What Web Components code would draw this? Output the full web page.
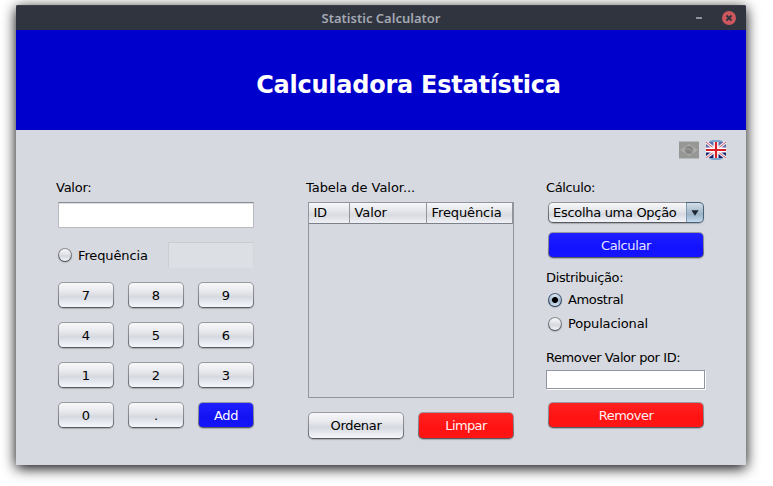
<!DOCTYPE html>
<html lang="pt">
<head>
<meta charset="utf-8">
<title>Statistic Calculator</title>
<style>
html,body{margin:0;height:100%;background:#fff;overflow:hidden}
body{font:13px/15px "DejaVu Sans",sans-serif;color:#000;box-sizing:border-box;padding:5px 0 0 16px}
</style>
</head>
<body>
<calc-app></calc-app>
<script>
const define = (name, html) => customElements.define(name, class extends HTMLElement {
  constructor() {
    super();
    const t = document.createElement('template');
    t.innerHTML = html;
    this.attachShadow({ mode: 'open' }).append(t.content.cloneNode(true));
  }
});

define('window-frame', `
<style>
:host{display:flex;flex-direction:column;width:730px;height:460px;background:#d6d9df;border-radius:2px 2px 0 0;box-shadow:0 3px 14px #000}
header{height:25px;background:#2f343f;border-radius:2px 2px 0 0;display:grid;grid-template-columns:80px 1fr 80px;align-items:center;box-shadow:inset 0 1px #3b404a}
h1{grid-column:2;margin:0;position:relative;text-align:center;font:600 13px/18px "Noto Sans",sans-serif;color:#a4a9b3;letter-spacing:0}
.ctl{display:flex;align-items:center;justify-content:flex-end;gap:20px;padding-right:10px}
.min{width:6px;height:2px;background:#90939b}
svg{display:block}
</style>
<header><h1><slot name="title"></slot></h1><div class="ctl"><span class="min"></span>
<svg width="14" height="14" viewBox="0 0 14 14"><circle cx="7" cy="7" r="7" fill="#cc575d"/><path d="M4.5 4.5l5 5M9.5 4.5l-5 5" stroke="#2f343f" stroke-width="2"/></svg></div></header>
<slot></slot>`);

define('app-banner', `
<style>
:host{display:flex;align-items:center;justify-content:center;height:100px;background:#0000cc;color:#fff;box-sizing:border-box;padding:10px 0 0 55px}
h2{margin:0;font:bold 24px/28px "DejaVu Sans",sans-serif;white-space:nowrap;letter-spacing:-.25px}
</style><h2><slot></slot></h2>`);

define('text-label', `
<style>:host{display:block;height:15px;line-height:15px;white-space:nowrap}</style><slot></slot>`);

define('text-box', `
<style>
:host{display:block;box-sizing:border-box;height:26px;background:#fff;border:1px solid #b8babf;border-top-color:#8c8d92;box-shadow:inset 0 1px #dcdde0}
:host([disabled]){background:#dcdfe3;border-color:#c9ccd1 #d3d6db #dbdee3 #cbced4;box-shadow:none}
:host([plain]){height:19px;border-color:#92959d;box-shadow:1px 1px #fff}
</style>`);

define('push-button', `
<style>
:host{display:block;height:26px;box-sizing:border-box;border-radius:5px;padding:1px;
 background:linear-gradient(#9a9ca1,#85878c 60%,#55575c);box-shadow:0 1px 1px #a9acb2}
div{height:100%;box-sizing:border-box;border-radius:4px;display:flex;align-items:center;justify-content:center;padding-top:var(--nudge,1px);white-space:nowrap;
 background:linear-gradient(#f8f8fa 0,#e8e9ed 35%,#d6d9df 57%,#dfe2e9 70%,#f5f7fc 100%)}
:host([tone=blue]) div{background:linear-gradient(#2020ff,#1212f2 60%,#1515ff);color:#fff}
:host([tone=bright]) div{background:linear-gradient(#2020ff,#1212ff 60%,#1515ff);color:#e4e6ff}
:host([tone=red]) div{background:linear-gradient(#ff2222,#ff1212 60%,#ff1616);color:#fff0f0}
</style><div><slot></slot></div>`);

define('radio-option', `
<style>
:host{display:flex;align-items:center;gap:6px;height:15px;white-space:nowrap}
i{width:14px;height:14px;box-sizing:border-box;border-radius:50%;padding:1px;background:linear-gradient(#909298,#505258);box-shadow:0 1px 1px #b5b8be;display:flex}
b{flex:1;border-radius:50%;background:linear-gradient(#fafafc,#dfe1e6 45%,#d3d6dc 58%,#f5f6fa)}
:host([checked]) i{background:linear-gradient(#53677e,#22364c)}
:host([checked]) b{background:radial-gradient(circle,#000 2.6px,transparent 3.4px),linear-gradient(#e3edf5,#9db5c9 55%,#d6e8f8)}
</style><i><b></b></i><span><slot></slot></span>`);

define('select-box', `
<style>
:host{display:flex;height:21px;box-sizing:border-box;border-radius:5px;padding:1px;background:linear-gradient(90deg,transparent 138px,#4b6176 138px),linear-gradient(#94969b,#55575c);box-shadow:0 1px 1px #a9acb2}
span{flex:1;padding-left:4px;line-height:19px;white-space:nowrap;border-radius:4px 0 0 4px;background:linear-gradient(#f8f8fa,#e4e6ea 40%,#d6d9df 60%,#f3f5fa)}
div{width:16px;border-left:1px solid #7f98ae;border-radius:0 4px 4px 0;background:linear-gradient(#d3dfe9,#a4bacc 50%,#9cb3c6 60%,#c4dbf0);display:flex;align-items:center;justify-content:center}
svg{display:block}
</style><span><slot></slot></span><div><svg width="8" height="6"><path d="M.4.3h7.2L4 5.8z" fill="#1c2731"/></svg></div>`);

define('value-table', `
<style>
:host{display:block;height:196px;box-sizing:border-box;border:1px solid #92959d}
table{width:100%;border-collapse:separate;border-spacing:0;table-layout:fixed}
th{height:21px;box-sizing:border-box;padding:0 0 1px 4.5px;text-align:left;font-weight:normal;line-height:18px;white-space:nowrap;
 border-right:1px solid #92959d;border-bottom:1px solid #7c8088;background:linear-gradient(#f7f7f9,#e4e6ea 40%,#d9dbe1 60%,#eff1f6)}
</style>
<table><colgroup><col style="width:41px"><col style="width:77px"><col></colgroup><thead><tr>
<th style="letter-spacing:-.4px">ID</th><th style="letter-spacing:-.1px">Valor</th><th style="letter-spacing:-.1px">Frequência</th></tr></thead></table>`);

define('flag-switch', `
<style>:host{display:flex;justify-content:flex-end;gap:7px;height:20px}svg{display:block}</style>
<svg width="20" height="20" viewBox="0 0 20 20"><path fill="#b8bbbd" d="M0 1h20v18H0z"/><path fill="#979896" d="M0 2h20v16H0z"/><path fill="#aaaba8" d="M1 10l9-6 9 6-9 6z"/><circle cx="10" cy="10" r="4" fill="#858684"/><path d="M6.5 8.8q4-.5 7 2.6" fill="none" stroke="#a5a6a4"/></svg>
<svg width="20" height="20" viewBox="0 0 20 20"><rect x="2" width="16" height="20" rx="5" fill="#7aa5cf"/><path fill="#17206f" d="M0 2h20v16H0z"/><path fill="#6069a8" d="M0 2h20v7H0z"/><path stroke="#eceaf2" stroke-width="3" d="M0 2l20 16M20 2L0 18"/><path stroke="#d9606a" stroke-width="1" d="M0 2l20 16M20 2L0 18"/><path stroke="#fff" stroke-width="5" d="M10 2v16M0 10h20"/><path stroke="#d81f2a" stroke-width="2.2" d="M10 2v16M0 10h20"/></svg>`);

define('key-pad', `
<style>:host{display:grid;grid-template-columns:repeat(3,56px);gap:14px}</style>
<push-button>7</push-button><push-button>8</push-button><push-button>9</push-button>
<push-button>4</push-button><push-button>5</push-button><push-button>6</push-button>
<push-button>1</push-button><push-button>2</push-button><push-button>3</push-button>
<push-button>0</push-button><push-button>.</push-button><push-button tone="blue" style="letter-spacing:-.4px">Add</push-button>`);

define('calc-app', `
<style>
:host{display:block}
main{padding:10px 20px 0 40px}
.cols{display:grid;grid-template-columns:198px 52px 208px 32px 160px;margin-top:20px}
.mid{grid-column:3}.right{grid-column:5}
.left>*:not(text-label),.mid>*:not(text-label){margin-left:2px}
.freq{display:flex;justify-content:space-between;align-items:center;margin-top:14px}
.freq text-box{width:86px}
.left>text-box,value-table,select-box{margin-top:7px}
key-pad{margin-top:14px}
.pair{display:grid;grid-template-columns:1fr 1fr;gap:14px;margin-top:14px}
.pair push-button{height:27px;--nudge:0}
.right{letter-spacing:-.37px}
.right>push-button,.right>select-box,.right>radio-option{margin-left:2px;margin-right:2px}
</style>
<window-frame>
 <span slot="title">Statistic Calculator</span>
 <app-banner>Calculadora Estatística</app-banner>
 <main>
  <flag-switch></flag-switch>
  <div class="cols">
   <section class="left">
    <text-label style="letter-spacing:-.25px">Valor:</text-label>
    <text-box></text-box>
    <div class="freq"><radio-option style="letter-spacing:-.12px">Frequência</radio-option><text-box disabled></text-box></div>
    <key-pad></key-pad>
   </section>
   <section class="mid">
    <text-label style="letter-spacing:-.05px">Tabela de Valor...</text-label>
    <value-table></value-table>
    <div class="pair"><push-button style="letter-spacing:-.3px">Ordenar</push-button><push-button tone="red" style="letter-spacing:-.6px">Limpar</push-button></div>
   </section>
   <section class="right">
    <text-label>Cálculo:</text-label>
    <select-box style="letter-spacing:-.3px">Escolha uma Opção</select-box>
    <push-button tone="bright" style="margin-top:9px">Calcular</push-button>
    <text-label style="margin-top:12px">Distribuição:</text-label>
    <radio-option checked style="margin-top:7px">Amostral</radio-option>
    <radio-option style="margin-top:9px;letter-spacing:-.17px">Populacional</radio-option>
    <text-label style="margin-top:19px;letter-spacing:-.42px">Remover Valor por ID:</text-label>
    <text-box plain style="margin-top:5px;margin-right:1px"></text-box>
    <push-button tone="red" style="margin-top:13px;letter-spacing:-.5px">Remover</push-button>
   </section>
  </div>
 </main>
</window-frame>`);
</script>
</body>
</html>
